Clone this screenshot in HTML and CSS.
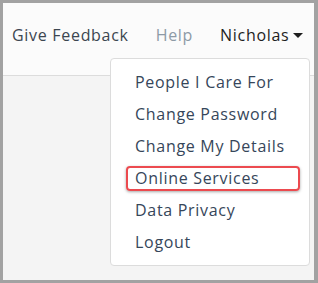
FILE: index.html
```html
<!DOCTYPE html>
<html lang="en">
<head>
  <meta charset="UTF-8" />
  <title>Menu</title>
  <link rel="stylesheet" href="styles.css">
</head>
<body>
  <div class="frame">
    <header class="topbar">
      <nav class="nav">
        <a class="nav-link" href="#">Give Feedback</a>
        <a class="nav-link muted" href="#">Help</a>
        <a class="nav-link user" href="#">Nicholas<span class="caret"></span></a>
      </nav>
    </header>
    <div class="content"></div>

    <!-- user dropdown -->
    <ul class="dropdown">
      <li><a href="#">People I Care For</a></li>
      <li><a href="#">Change Password</a></li>
      <li><a href="#">Change My Details</a></li>
      <li class="marked"><a href="#">Online Services</a></li>
      <li><a href="#">Data Privacy</a></li>
      <li><a href="#">Logout</a></li>
    </ul>
  </div>
</body>
</html>
```

FILE: styles.css
```css
* {
  box-sizing: border-box;
}
body {
  margin: 0;
  font-family: 'Open Sans', 'Noto Sans', sans-serif;
  font-size: 16px;
  letter-spacing: 0.7px;
}
.frame {
  position: relative;
  width: 318px;
  height: 283px;
  border: 3px solid #a2a2a2;
  border-right-width: 4px;
  background: #f4f4f4;
  display: flex;
  flex-direction: column;
}
.topbar {
  height: 73px;
  background: #fbfbfb;
  border-bottom: 1px solid #dcdcdc;
}
.nav {
  display: flex;
  align-items: center;
  height: 64px;
  padding-left: 9px;
}
.nav-link {
  text-decoration: none;
  color: #3c4650;
  margin-right: 27px;
}
.nav-link.muted {
  color: #8d9aa6;
}
.nav-link.user {
  color: #1e1e1e;
  margin-right: 0;
  display: flex;
  align-items: center;
}
.caret {
  display: inline-block;
  margin-left: 4px;
  border-left: 5px solid transparent;
  border-right: 5px solid transparent;
  border-top: 5px solid #1e1e1e;
}
.content {
  flex: 1;
}
.dropdown {
  position: absolute;
  left: 107px;
  top: 55px;
  width: 200px;
  height: 208px;
  margin: 0;
  padding: 7px 0 8px;
  list-style: none;
  background: #fff;
  border: 1px solid #dcdcdc;
  border-radius: 4px;
}
.dropdown li {
  position: relative;
  height: 32px;
  display: flex;
  align-items: center;
  padding-left: 24px;
}
.dropdown a {
  color: #36465a;
  text-decoration: none;
}
.dropdown li.marked::after {
  content: "";
  position: absolute;
  left: 15px;
  right: 9px;
  top: 4px;
  bottom: 3px;
  border: 2px solid #ec4a4f;
  border-radius: 4px;
  box-shadow: 0 1px 3px rgba(0, 0, 0, 0.35);
}
```
